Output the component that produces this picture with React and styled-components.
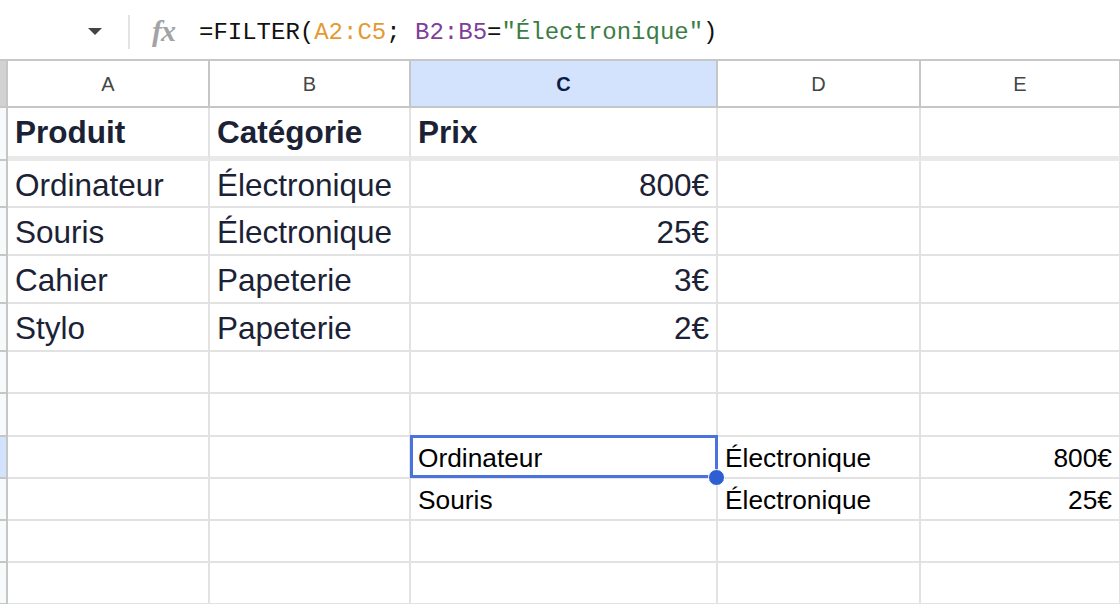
import React from "react";
import styled, { createGlobalStyle } from "styled-components";

const GlobalStyle = createGlobalStyle`
  html, body {
    margin: 0;
    padding: 0;
    background: #fff;
    overflow: hidden;
  }
  body {
    font-family: "Liberation Sans", Arial, sans-serif;
  }
`;

const COLS = "8px 202px 201px 307px 203px 200px";

const Page = styled.div`
  width: 1120px;
  height: 604px;
  overflow: hidden;
  background: #fff;
`;

const FormulaBar = styled.div`
  height: 61px;
  box-sizing: border-box;
  border-bottom: 2px solid #c7c7c7;
  display: flex;
  align-items: center;
  padding-left: 88px;
`;

const Caret = styled.div`
  width: 0;
  height: 0;
  border-left: 7px solid transparent;
  border-right: 7px solid transparent;
  border-top: 7px solid #444;
  margin-top: 3px;
`;

const Divider = styled.div`
  width: 2px;
  height: 34px;
  background: #e3e3e3;
  margin-left: 26px;
  margin-right: 22px;
  margin-top: 4px;
`;

const Fx = styled.span`
  font-family: "Liberation Serif", "DejaVu Serif", serif;
  font-style: italic;
  font-weight: 700;
  font-size: 30px;
  color: #a3a3a3;
  letter-spacing: -1px;
  margin-right: 24px;
  margin-top: 3px;
`;

const Formula = styled.div`
  font-family: "Liberation Mono", "DejaVu Sans Mono", monospace;
  font-size: 24px;
  color: #111;
  white-space: pre;
  margin-top: 5px;
`;

const Tok = styled.span`
  color: ${(p) => p.$c};
`;

const Row = styled.div`
  display: grid;
  grid-template-columns: ${COLS};
  height: ${(p) => p.$h}px;
`;

const RowHead = styled.div`
  box-sizing: border-box;
  background: ${(p) => (p.$corner ? "#d2d2d2" : p.$active ? "#d3e3fd" : "#f8f9fa")};
  border-right: 2px solid #c4c7c5;
  border-bottom: 2px solid #c4c7c5;
`;

const ColHead = styled.div`
  box-sizing: border-box;
  display: flex;
  align-items: center;
  justify-content: center;
  padding-top: 2px;
  font-size: 20px;
  color: ${(p) => (p.$active ? "#0b1d46" : "#444746")};
  font-weight: ${(p) => (p.$active ? 700 : 400)};
  background: ${(p) => (p.$active ? "#d3e3fd" : "#fff")};
  border-right: 2px solid #c4c7c5;
  border-bottom: 2px solid #c4c7c5;
`;

const Cell = styled.div`
  position: relative;
  box-sizing: border-box;
  display: flex;
  align-items: center;
  justify-content: ${(p) => (p.$right ? "flex-end" : "flex-start")};
  padding: ${(p) => (p.$frozen ? "0 7px 0 7px" : "3px 7px 0 7px")};
  border-right: 2px solid #e2e2e2;
  border-bottom: ${(p) => (p.$frozen ? "5px solid #e9e9e9" : "2px solid #e2e2e2")};
  font-size: ${(p) => (p.$small ? "26.3px" : "31.5px")};
  font-weight: ${(p) => (p.$bold ? 700 : 400)};
  color: ${(p) => (p.$small ? "#000" : "#1b2236")};
  white-space: nowrap;
  overflow: visible;
`;

const Selection = styled.div`
  position: absolute;
  left: -1px;
  top: -2px;
  right: -2px;
  bottom: -1px;
  border: 3px solid #4a74dc;
  pointer-events: none;
`;

const Handle = styled.div`
  position: absolute;
  right: -9px;
  bottom: -9px;
  width: 15px;
  height: 15px;
  border-radius: 50%;
  background: #2d5fd3;
  border: 1px solid #fff;
  z-index: 2;
`;

const rows = [
  { h: 53, frozen: true, bold: true, cells: ["Produit", "Catégorie", "Prix", "", ""] },
  { h: 47, cells: ["Ordinateur", "Électronique", "800€", "", ""] },
  { h: 48, cells: ["Souris", "Électronique", "25€", "", ""] },
  { h: 48, cells: ["Cahier", "Papeterie", "3€", "", ""] },
  { h: 48, cells: ["Stylo", "Papeterie", "2€", "", ""] },
  { h: 42, small: true, cells: ["", "", "", "", ""] },
  { h: 43, small: true, cells: ["", "", "", "", ""] },
  { h: 42, small: true, active: true, cells: ["", "", "Ordinateur", "Électronique", "800€"] },
  { h: 42, small: true, cells: ["", "", "Souris", "Électronique", "25€"] },
  { h: 42, small: true, cells: ["", "", "", "", ""] },
  { h: 42, small: true, cells: ["", "", "", "", ""] },
];

const isRight = (rowIdx, colIdx, row) => {
  if (row.small) return colIdx === 4;
  return colIdx === 2 && rowIdx > 0;
};

export default function App() {
  return (
    <Page>
      <GlobalStyle />
      <FormulaBar>
        <Caret />
        <Divider />
        <Fx>fx</Fx>
        <Formula>
          =FILTER(<Tok $c="#e49a32">A2:C5</Tok>; <Tok $c="#7e3f98">B2:B5</Tok>=<Tok $c="#3b7d45">"Électronique"</Tok>)
        </Formula>
      </FormulaBar>

      <Row $h={47}>
        <RowHead $corner />
        {["A", "B", "C", "D", "E"].map((l) => (
          <ColHead key={l} $active={l === "C"}>{l}</ColHead>
        ))}
      </Row>

      {rows.map((row, i) => (
        <Row key={i} $h={row.h}>
          <RowHead $active={row.active} />
          {row.cells.map((text, j) => (
            <Cell
              key={j}
              $frozen={row.frozen}
              $bold={row.bold}
              $small={row.small}
              $right={isRight(i, j, row)}
            >
              {text}
              {row.active && j === 2 && (
                <>
                  <Selection />
                  <Handle />
                </>
              )}
            </Cell>
          ))}
        </Row>
      ))}
    </Page>
  );
}
